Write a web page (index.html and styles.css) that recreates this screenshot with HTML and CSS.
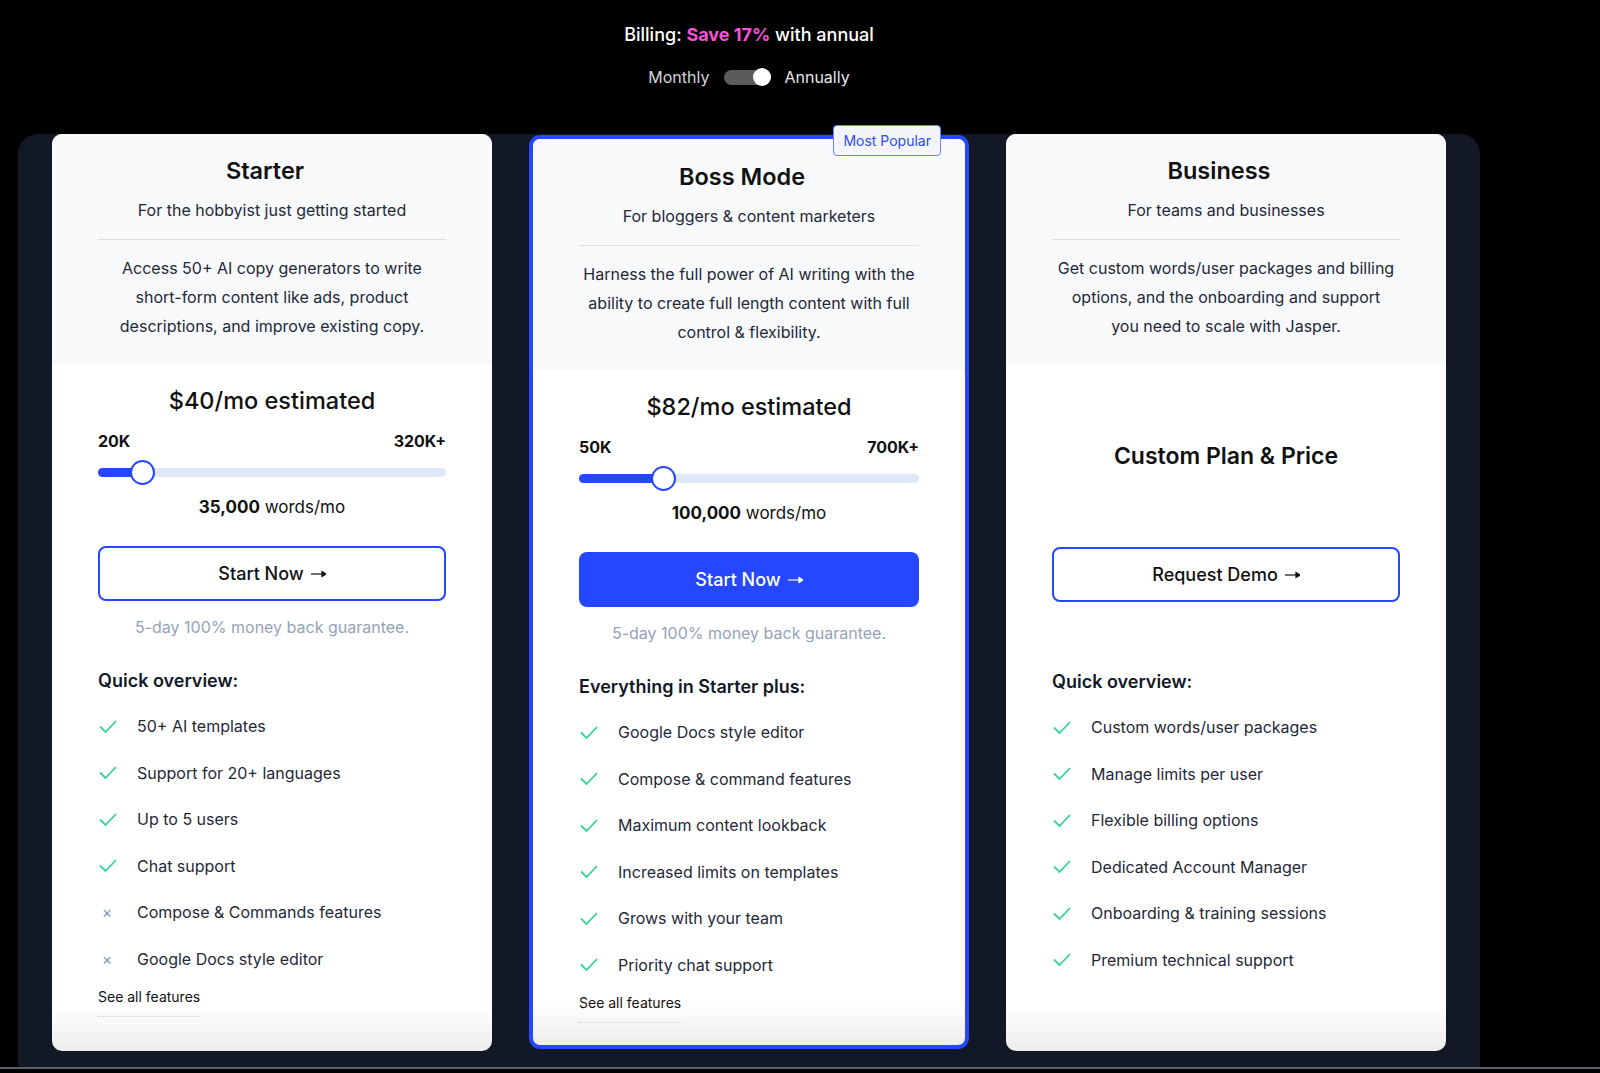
FILE: index.html
```html
<!DOCTYPE html>
<html lang="en">
<head>
<meta charset="UTF-8">
<meta name="viewport" content="width=device-width, initial-scale=1.0">
<title>Pricing</title>
<link rel="stylesheet" href="styles.css">
</head>
<body>
    <div class="page">
        <div class="billing">
            <h2 class="billing-title">Billing: <span class="save">Save 17%</span> with annual</h2>
            <div class="toggle-row">
                <span class="toggle-label">Monthly</span>
                <span class="toggle"><span class="toggle-knob"></span></span>
                <span class="toggle-label active">Annually</span>
            </div>
        </div>

        <div class="panel">
            <div class="plans">

                <div class="plan">
                    <div class="plan-top">
                        <h3 class="plan-name">Starter</h3>
                        <p class="plan-tagline">For the hobbyist just getting started</p>
                        <p class="plan-desc">Access 50+ AI copy generators to write short-form content like ads, product descriptions, and improve existing copy.</p>
                    </div>
                    <div class="plan-body">
                        <div class="price">$40/mo estimated</div>
                        <div class="range-labels"><span>20K</span><span>320K+</span></div>
                        <div class="slider">
                            <div class="slider-fill" style="width: 13%"><span class="slider-knob"></span></div>
                        </div>
                        <div class="words"><b>35,000</b> words/mo</div>
                        <a class="btn btn-outline" href="#">Start Now <svg class="arrow" viewBox="0 0 15 10"><line x1="0" y1="5" x2="12" y2="5"/><polygon points="11,2.6 15,5 11,7.4"/></svg></a>
                        <p class="guarantee">5-day 100% money back guarantee.</p>
                        <h4 class="overview-title">Quick overview:</h4>
                        <ul class="features">
                            <li><svg class="icon-check" viewBox="0 0 18 13"><polyline points="1,6.5 6.5,12 17,1"/></svg>50+ AI templates</li>
                            <li><svg class="icon-check" viewBox="0 0 18 13"><polyline points="1,6.5 6.5,12 17,1"/></svg>Support for 20+ languages</li>
                            <li><svg class="icon-check" viewBox="0 0 18 13"><polyline points="1,6.5 6.5,12 17,1"/></svg>Up to 5 users</li>
                            <li><svg class="icon-check" viewBox="0 0 18 13"><polyline points="1,6.5 6.5,12 17,1"/></svg>Chat support</li>
                            <li><span class="icon-x">&times;</span>Compose &amp; Commands features</li>
                            <li><span class="icon-x">&times;</span>Google Docs style editor</li>
                        </ul>
                        <a class="see-all" href="#">See all features</a>
                    </div>
                </div>

                <div class="plan plan-popular">
                    <span class="badge">Most Popular</span>
                    <div class="plan-top">
                        <h3 class="plan-name">Boss Mode</h3>
                        <p class="plan-tagline">For bloggers &amp; content marketers</p>
                        <p class="plan-desc">Harness the full power of AI writing with the ability to create full length content with full control &amp; flexibility.</p>
                    </div>
                    <div class="plan-body">
                        <div class="price">$82/mo estimated</div>
                        <div class="range-labels"><span>50K</span><span>700K+</span></div>
                        <div class="slider">
                            <div class="slider-fill" style="width: 25%"><span class="slider-knob"></span></div>
                        </div>
                        <div class="words"><b>100,000</b> words/mo</div>
                        <a class="btn btn-solid" href="#">Start Now <svg class="arrow" viewBox="0 0 15 10"><line x1="0" y1="5" x2="12" y2="5"/><polygon points="11,2.6 15,5 11,7.4"/></svg></a>
                        <p class="guarantee">5-day 100% money back guarantee.</p>
                        <h4 class="overview-title">Everything in Starter plus:</h4>
                        <ul class="features">
                            <li><svg class="icon-check" viewBox="0 0 18 13"><polyline points="1,6.5 6.5,12 17,1"/></svg>Google Docs style editor</li>
                            <li><svg class="icon-check" viewBox="0 0 18 13"><polyline points="1,6.5 6.5,12 17,1"/></svg>Compose &amp; command features</li>
                            <li><svg class="icon-check" viewBox="0 0 18 13"><polyline points="1,6.5 6.5,12 17,1"/></svg>Maximum content lookback</li>
                            <li><svg class="icon-check" viewBox="0 0 18 13"><polyline points="1,6.5 6.5,12 17,1"/></svg>Increased limits on templates</li>
                            <li><svg class="icon-check" viewBox="0 0 18 13"><polyline points="1,6.5 6.5,12 17,1"/></svg>Grows with your team</li>
                            <li><svg class="icon-check" viewBox="0 0 18 13"><polyline points="1,6.5 6.5,12 17,1"/></svg>Priority chat support</li>
                        </ul>
                        <a class="see-all" href="#">See all features</a>
                    </div>
                </div>

                <div class="plan">
                    <div class="plan-top">
                        <h3 class="plan-name">Business</h3>
                        <p class="plan-tagline">For teams and businesses</p>
                        <p class="plan-desc narrow">Get custom words/user packages and billing options, and the onboarding and support you need to scale with Jasper.</p>
                    </div>
                    <div class="plan-body">
                        <div class="custom-price">Custom Plan &amp; Price</div>
                        <a class="btn btn-outline" href="#">Request Demo <svg class="arrow" viewBox="0 0 15 10"><line x1="0" y1="5" x2="12" y2="5"/><polygon points="11,2.6 15,5 11,7.4"/></svg></a>
                        <div class="guarantee-space"></div>
                        <h4 class="overview-title">Quick overview:</h4>
                        <ul class="features">
                            <li><svg class="icon-check" viewBox="0 0 18 13"><polyline points="1,6.5 6.5,12 17,1"/></svg>Custom words/user packages</li>
                            <li><svg class="icon-check" viewBox="0 0 18 13"><polyline points="1,6.5 6.5,12 17,1"/></svg>Manage limits per user</li>
                            <li><svg class="icon-check" viewBox="0 0 18 13"><polyline points="1,6.5 6.5,12 17,1"/></svg>Flexible billing options</li>
                            <li><svg class="icon-check" viewBox="0 0 18 13"><polyline points="1,6.5 6.5,12 17,1"/></svg>Dedicated Account Manager</li>
                            <li><svg class="icon-check" viewBox="0 0 18 13"><polyline points="1,6.5 6.5,12 17,1"/></svg>Onboarding &amp; training sessions</li>
                            <li><svg class="icon-check" viewBox="0 0 18 13"><polyline points="1,6.5 6.5,12 17,1"/></svg>Premium technical support</li>
                        </ul>
                    </div>
                </div>

            </div>
        </div>
    </div>
    <div class="bottom-rule"></div>
</body>
</html>
```

FILE: styles.css
```css
body {
    margin: 0;
    background-color: #000;
    font-family: Inter, "Noto Sans", sans-serif;
    color: #1f2937;
}

.page {
    width: 1462px;
    margin-left: 18px;
}

/* billing switch */
.billing {
    text-align: center;
    padding-top: 24px;
    height: 137px;
    box-sizing: border-box;
}

.billing-title {
    margin: 0;
    font-size: 18px;
    line-height: 22px;
    font-weight: 500;
    color: #fff;
}

.save {
    color: #f552d6;
    font-weight: 700;
}

.toggle-row {
    display: flex;
    justify-content: center;
    align-items: center;
    margin-top: 21px;
}

.toggle-label {
    font-size: 16px;
    line-height: 20px;
    color: #d1d5db;
}

.toggle-label.active {
    color: #e5e7eb;
}

.toggle {
    display: flex;
    align-items: center;
    justify-content: flex-end;
    width: 47px;
    height: 15px;
    margin: 0 13px 0 15px;
    border-radius: 8px;
    background-color: #5b5b5b;
}

.toggle-knob {
    width: 18px;
    height: 18px;
    border-radius: 50%;
    background-color: #fff;
}

/* dark panel */
.panel {
    background-color: #121826;
    border-radius: 20px 20px 0 0;
    padding: 0 34px 19px;
    height: 933px;
    box-sizing: border-box;
}

.plans {
    display: grid;
    grid-template-columns: repeat(3, 440px);
    column-gap: 37px;
    margin-top: -3px;
}

.plan {
    position: relative;
    display: flex;
    flex-direction: column;
    height: 917px;
    box-sizing: border-box;
    border-radius: 10px;
    background: linear-gradient(to bottom, #fff calc(100% - 45px), #ededed);
}

.plan-popular {
    border: 4px solid #2447ff;
    margin-top: 1px;
    height: 914px;
    border-radius: 11px;
}

.badge {
    position: absolute;
    top: -14px;
    right: 24px;
    height: 31px;
    padding: 0 9px;
    box-sizing: border-box;
    display: flex;
    align-items: center;
    font-size: 14px;
    color: #2d4cf5;
    background-color: #f3f5fb;
    border: 1px solid #6e86f3;
    border-radius: 4px;
}

.plan-top {
    background-color: #f8f9fb;
    border-radius: 10px 10px 0 0;
    padding: 22px 46px 23px;
    text-align: center;
}

.plan-popular .plan-top {
    border-radius: 7px 7px 0 0;
    padding-top: 23px;
}

.plan-name {
    margin: 0;
    padding-right: 14px;
    font-size: 23.5px;
    line-height: 30px;
    font-weight: 600;
    color: #111;
}

.plan-tagline {
    margin: 12px 0 0;
    padding-bottom: 17px;
    border-bottom: 1px solid #dcdfe4;
    font-size: 16px;
    line-height: 24px;
    color: #1f2937;
}

.plan-desc {
    margin: 14px 0 0;
    font-size: 16px;
    line-height: 29px;
    color: #1f2937;
}

.plan-desc.narrow {
    padding: 0 5px;
}

.plan-body {
    flex: 1;
    padding: 22px 46px 0;
    display: flex;
    flex-direction: column;
}

.price {
    text-align: center;
    font-size: 23.5px;
    line-height: 30px;
    font-weight: 500;
    color: #111;
}

.range-labels {
    display: flex;
    justify-content: space-between;
    margin-top: 15px;
    font-size: 16px;
    line-height: 20px;
    font-weight: 700;
    color: #111;
}

.slider {
    margin-top: 17px;
    height: 9px;
    border-radius: 5px;
    background-color: #e0e8f7;
}

.slider-fill {
    position: relative;
    height: 9px;
    border-radius: 5px;
    background-color: #2447ff;
}

.slider-knob {
    position: absolute;
    right: -12px;
    top: -8px;
    width: 25px;
    height: 25px;
    box-sizing: border-box;
    border: 2px solid #2447ff;
    border-radius: 50%;
    background-color: #fff;
}

.words {
    margin-top: 18px;
    text-align: center;
    font-size: 17px;
    line-height: 24px;
    color: #111;
}

.words b {
    font-weight: 700;
}

.btn {
    display: flex;
    align-items: center;
    justify-content: center;
    height: 55px;
    margin-top: 27px;
    box-sizing: border-box;
    border-radius: 8px;
    font-size: 18px;
    font-weight: 500;
    text-decoration: none;
}

.arrow {
    width: 15px;
    height: 10px;
    margin-left: 7px;
    stroke: currentColor;
    stroke-width: 1.2;
    fill: currentColor;
}

.btn-outline {
    border: 2px solid #2447ff;
    color: #111;
    background-color: #fff;
}

.btn-solid {
    background-color: #2447ff;
    color: #fff;
}

.guarantee {
    margin: 14px 0 0;
    text-align: center;
    font-size: 16px;
    line-height: 24px;
    color: #94a3b8;
}

.guarantee-space {
    height: 38px;
}

.custom-price {
    height: 134px;
    display: flex;
    align-items: center;
    justify-content: center;
    padding-top: 6px;
    box-sizing: border-box;
    font-size: 23px;
    font-weight: 600;
    color: #111;
}

.overview-title {
    margin: 30px 0 0;
    font-size: 18px;
    line-height: 24px;
    font-weight: 600;
    color: #111827;
}

.features {
    list-style: none;
    margin: 21px 0 0;
    padding: 0;
}

.features li {
    display: flex;
    align-items: center;
    height: 24px;
    margin-bottom: 22.5px;
    font-size: 16px;
    color: #1f2937;
}

.icon-check {
    width: 18px;
    height: 13px;
    margin: 0 20px 0 1px;
    fill: none;
    stroke: #34d399;
    stroke-width: 1.8;
    flex-shrink: 0;
}

.icon-x {
    width: 18px;
    margin-right: 21px;
    font-size: 16px;
    text-align: center;
    color: #8896c2;
    flex-shrink: 0;
}

.see-all {
    align-self: flex-start;
    margin-top: -6.5px;
    padding-bottom: 9px;
    border-bottom: 1px dotted #cfd4dc;
    font-size: 14px;
    line-height: 20px;
    color: #111;
    text-decoration: none;
}

.bottom-rule {
    height: 2px;
    background-color: #5d6169;
}
```
